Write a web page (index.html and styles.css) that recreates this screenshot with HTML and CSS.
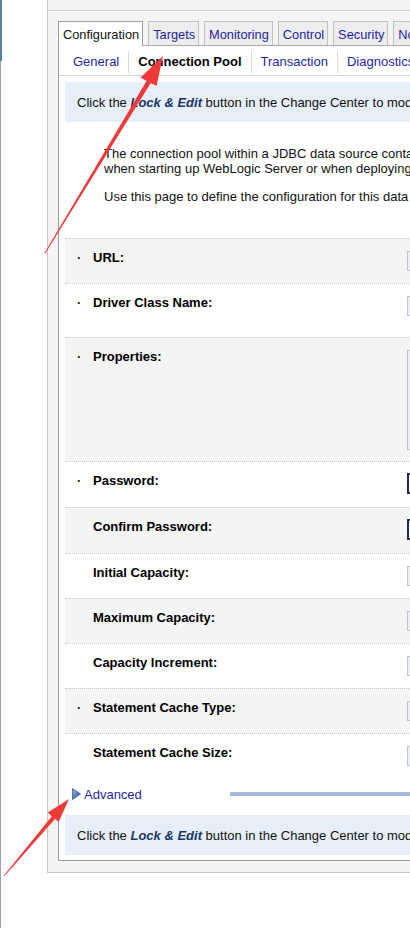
FILE: index.html
```html
<!DOCTYPE html>
<html lang="en">
<head>
<meta charset="utf-8">
<title>Connection Pool</title>
<link rel="stylesheet" href="styles.css">
</head>
<body>
<div class="page">
  <div class="nav">
    <div class="nav-top"></div>
    <div class="nav-line"></div>
  </div>
  <div class="outer">
    <div class="outer-top"></div>
    <div class="inner">
      <div class="tabs">
        <div class="tab active">Configuration</div>
        <div class="tab">Targets</div>
        <div class="tab">Monitoring</div>
        <div class="tab">Control</div>
        <div class="tab">Security</div>
        <div class="tab">Notes</div>
      </div>
      <div class="content">
        <div class="subtabs">
          <span class="subtab link">General</span>
          <span class="subtab current">Connection Pool</span>
          <span class="subtab link">Transaction</span>
          <span class="subtab link">Diagnostics</span>
          <span class="subtab link">Identity Options</span>
        </div>
        <div class="info">Click the&nbsp;<b class="lock">Lock &amp; Edit</b>&nbsp;button in the Change Center to modify the settings on this page.</div>
        <div class="desc">
          <p>The connection pool within a JDBC data source contains a group of JDBC connections that applications reserve, use, and then return to the pool.<br>when starting up WebLogic Server or when deploying the data source to a new target.</p>
          <p>Use this page to define the configuration for this data source's connection pool.</p>
        </div>
        <div class="form">
          <div class="row shade">
            <span class="bullet">·</span><span class="label">URL:</span><span class="field"></span>
          </div>
          <div class="row h54">
            <span class="bullet">·</span><span class="label">Driver Class Name:</span><span class="field"></span>
          </div>
          <div class="row shade h124">
            <span class="bullet">·</span><span class="label">Properties:</span><span class="field area"></span>
          </div>
          <div class="row h46">
            <span class="bullet">·</span><span class="label">Password:</span><span class="field pw"></span>
          </div>
          <div class="row shade h46">
            <span class="bullet"></span><span class="label">Confirm Password:</span><span class="field pw"></span>
          </div>
          <div class="row">
            <span class="bullet"></span><span class="label">Initial Capacity:</span><span class="field"></span>
          </div>
          <div class="row shade">
            <span class="bullet"></span><span class="label">Maximum Capacity:</span><span class="field"></span>
          </div>
          <div class="row">
            <span class="bullet"></span><span class="label">Capacity Increment:</span><span class="field"></span>
          </div>
          <div class="row shade">
            <span class="bullet">·</span><span class="label">Statement Cache Type:</span><span class="field"></span>
          </div>
          <div class="row">
            <span class="bullet"></span><span class="label">Statement Cache Size:</span><span class="field"></span>
          </div>
        </div>
        <div class="advanced">
          <span class="adv-link">
            <svg class="adv-icon" width="9" height="12" viewBox="0 0 9 12">
              <defs>
                <linearGradient id="tri" x1="0" y1="0" x2="1" y2="1">
                  <stop offset="0" stop-color="#9db4e0"/>
                  <stop offset="1" stop-color="#2f4f9a"/>
                </linearGradient>
              </defs>
              <polygon points="0.5,0.5 8.5,6 0.5,11.5" fill="url(#tri)" stroke="#3a5798" stroke-width="0.8"/>
            </svg>
            <span class="link">Advanced</span>
          </span>
          <span class="adv-bar"></span>
        </div>
        <div class="info bottom">Click the&nbsp;<b class="lock">Lock &amp; Edit</b>&nbsp;button in the Change Center to modify the settings on this page.</div>
      </div>
    </div>
  </div>
</div>
<svg class="arrows" width="410" height="928" viewBox="0 0 410 928">
  <polygon fill="#f03a3a" points="44.6,252.7 146.5,81 140.5,77.5 163,56 156.5,86 150.8,83 45.4,253.3"/>
  <polygon fill="#f03a3a" points="3.7,875.7 51.8,816.2 47.8,812.6 69,799 58.6,821.9 55.2,818.8 4.3,876.3"/>
</svg>
</body>
</html>
```
FILE: styles.css
```css
html, body {
  margin: 0;
  padding: 0;
}
body {
  width: 410px;
  height: 928px;
  overflow: hidden;
  background: #fefefe;
  font-family: "Liberation Sans", Arial, sans-serif;
  font-size: 13px;
  color: #111;
  position: relative;
}
.page {
  display: flex;
  width: 760px;
  height: 928px;
}
.nav {
  width: 47px;
  flex: none;
  display: flex;
  flex-direction: column;
}
.nav-top {
  width: 2px;
  height: 61px;
  background: #5b80a6;
}
.nav-line {
  width: 1px;
  flex: 1;
  background: #a2a2a2;
}
.outer {
  flex: 1;
  height: 873px;
  box-sizing: border-box;
  background: #f4f4f4;
  border-left: 1px solid #c6c6c6;
  border-bottom: 1px solid #c6c6c6;
  padding-bottom: 11px;
  display: flex;
  flex-direction: column;
}
.outer-top {
  height: 10px;
  border-bottom: 1px solid #d2d2d2;
  flex: none;
}
.inner {
  flex: 1;
  margin: 10px 0 0 10px;
  display: flex;
  flex-direction: column;
}
.tabs {
  display: flex;
  align-items: flex-end;
  gap: 5px;
  height: 24px;
  flex: none;
}
.tab {
  box-sizing: border-box;
  height: 24px;
  line-height: 21px;
  padding: 2px 3px 0 4px;
  font-size: 12.8px;
  background: #ededed;
  border: 1px solid #c2c2c2;
  border-bottom: none;
  color: #1f1f9f;
  white-space: nowrap;
}
.tab.active {
  position: relative;
  height: 25px;
  margin-bottom: -1px;
  background: #fff;
  border-color: #a0a0a0;
  color: #111;
}
.content {
  flex: 1;
  background: #fff;
  border-top: 1px solid #a8a8a8;
  border-left: 1px solid #a0a0a0;
  border-bottom: 1px solid #a0a0a0;
  display: flex;
  flex-direction: column;
}
.subtabs {
  box-sizing: border-box;
  height: 30px;
  border-bottom: 1px solid #d4d4d4;
  display: flex;
  align-items: center;
  padding: 3px 0 0 5px;
  white-space: nowrap;
  flex: none;
}
.subtab {
  padding: 0 9px;
  line-height: 22px;
}
.subtab + .subtab {
  border-left: 1px solid #dadada;
}
.link {
  color: #1f1fa8;
}
.current {
  font-weight: bold;
  color: #000;
}
.info {
  margin: 6px 6px 0 6px;
  height: 40px;
  background: #e6eef9;
  padding: 1px 0 0 12px;
  box-sizing: border-box;
  display: flex;
  align-items: center;
  white-space: nowrap;
  color: #111;
  flex: none;
}
.info.bottom {
  margin-top: 5px;
}
.lock {
  font-style: italic;
  color: #1c3766;
}
.desc {
  margin-top: 24px;
  padding-left: 45px;
  white-space: nowrap;
  flex: none;
}
.desc p {
  margin: 0;
  line-height: 15px;
}
.desc p + p {
  margin-top: 13px;
}
.form {
  margin: 34px 0 0 6px;
  flex: none;
}
.row {
  box-sizing: border-box;
  height: 45px;
  border-top: 1px dotted #c4c4c4;
  padding: 11px 0 0 12px;
  display: grid;
  grid-template-columns: 16px 314px 220px;
  align-items: start;
  white-space: nowrap;
}
.row.shade {
  background: #f4f4f4;
}
.row.h54 { height: 54px; }
.row.h46 { height: 46px; }
.row.h124 { height: 124px; }
.bullet {
  line-height: 15px;
  font-weight: bold;
  color: #222;
}
.label {
  line-height: 15px;
  font-weight: bold;
  color: #000;
}
.field {
  display: block;
  margin-top: 1px;
  height: 20px;
  box-sizing: border-box;
  border: 1px solid #c4c4c4;
  background: #e9eff9;
}
.field.area {
  height: 100px;
}
.field.pw {
  border: 2px solid #1e2c55;
  background: #fff;
  margin-top: 0;
  height: 21px;
}
.advanced {
  height: 32px;
  display: grid;
  grid-template-columns: 165px 1fr;
  align-items: center;
  margin-left: 6px;
  flex: none;
}
.adv-link {
  display: flex;
  align-items: center;
  padding-left: 7px;
}
.adv-icon {
  display: block;
  margin-right: 3px;
}
.adv-bar {
  height: 4px;
  background: #a4bad8;
}
.arrows {
  position: absolute;
  left: 0;
  top: 0;
  pointer-events: none;
}
```
